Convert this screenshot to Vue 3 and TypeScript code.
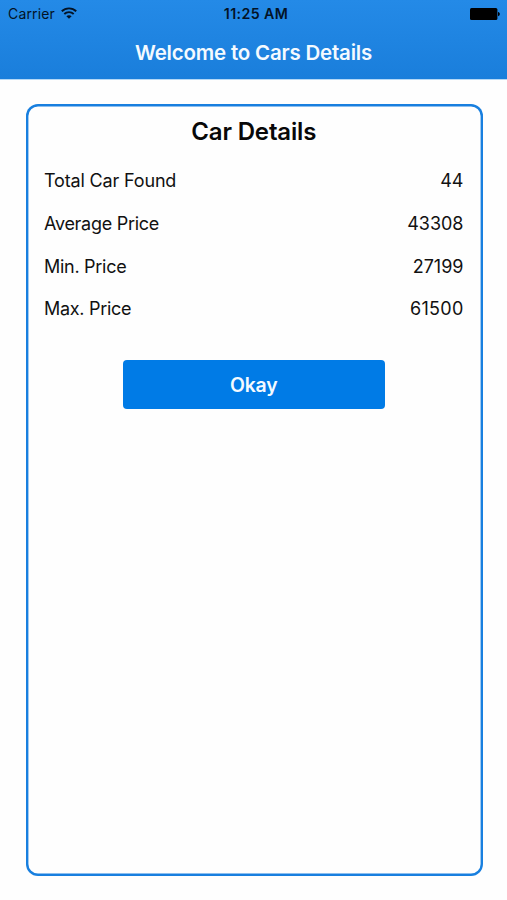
<script setup lang="ts">
interface DetailRow {
  label: string
  value: number
  tone: string
}

const rows: DetailRow[] = [
  { label: 'Total Car Found', value: 44, tone: 'total' },
  { label: 'Average Price', value: 43308, tone: 'average' },
  { label: 'Min. Price', value: 27199, tone: 'min' },
  { label: 'Max. Price', value: 61500, tone: 'max' },
]
</script>

<template>
  <div class="screen">
    <header class="header">
      <div class="status">
        <div class="carrier">
          <span class="carrier-name">Carrier</span>
          <svg class="wifi" width="16" height="12" viewBox="0 0 16 12" fill="none" stroke="#031326">
            <path d="M0.8 4.3C4.8 0.4 11.2 0.4 15.2 4.3" stroke-width="1.9" />
            <path d="M3.3 7C5.9 4.5 10.1 4.5 12.7 7" stroke-width="1.9" />
            <path d="M8 11.8L5.4 9.2C6.9 7.8 9.1 7.8 10.6 9.2Z" fill="#031326" stroke="none" />
          </svg>
        </div>
        <span class="time">11:25 AM</span>
        <svg class="battery" width="30" height="12" viewBox="0 0 30 12" fill="#000">
          <rect x="0" y="0" width="27.4" height="12" rx="1.5" />
          <path d="M28 4C30.4 4.2 30.4 8 28 8.2Z" />
        </svg>
      </div>
      <h1 class="title">Welcome to Cars Details</h1>
    </header>
    <main class="content">
      <section class="card">
        <h2 class="card-title">Car Details</h2>
        <dl class="rows">
          <div v-for="row in rows" :key="row.label" class="row" :class="row.tone">
            <dt class="label">{{ row.label }}</dt>
            <dd class="value">{{ row.value }}</dd>
          </div>
        </dl>
        <button class="okay" type="button">Okay</button>
      </section>
    </main>
  </div>
</template>

<style>
body {
  margin: 0;
  background: #fefefe;
}
</style>

<style scoped>
.screen {
  box-sizing: border-box;
  display: flex;
  flex-direction: column;
  width: 100%;
  height: 900px;
  overflow: hidden;
  background: #fefefe;
  color: #111;
  font-family: Inter, 'Liberation Sans', sans-serif;
}
.header {
  box-sizing: border-box;
  flex: none;
  height: 79px;
  background: linear-gradient(#248ae7, #1a7edb);
  box-shadow: 0 1px 0 #b5d8f6;
}
.status {
  display: grid;
  grid-template-columns: 1fr auto 1fr;
  align-items: center;
  height: 27px;
  padding: 0 7px 0 8px;
  color: #031326;
}
.carrier {
  display: flex;
  align-items: center;
  gap: 6px;
}
.carrier-name {
  font-size: 14px;
  letter-spacing: 0.15px;
  line-height: 27px;
}
.wifi {
  margin-top: -2px;
}
.time {
  padding-left: 4px;
  font-size: 14.2px;
  font-weight: 600;
  letter-spacing: 0.4px;
  line-height: 27px;
}
.battery {
  justify-self: end;
}
.title {
  margin: 0;
  padding-top: 13px;
  color: #f4faff;
  font-size: 20.5px;
  font-weight: 600;
  letter-spacing: -0.2px;
  line-height: 26px;
  text-align: center;
}
.content {
  display: flex;
  flex: 1;
  padding: 24.5px 24.5px 24.5px 25.5px;
}
.card {
  box-sizing: border-box;
  display: flex;
  flex: 1;
  flex-direction: column;
  align-items: center;
  box-shadow: inset 0 0 0 2.4px #187fdf;
  border-radius: 12px;
  padding: 13px 19px 0 18.5px;
}
.card-title {
  margin: 0;
  color: #080808;
  font-size: 24px;
  font-weight: 600;
  letter-spacing: -0.15px;
  line-height: 30px;
}
.rows {
  display: flex;
  flex-direction: column;
  align-self: stretch;
  margin: 13px 0 0;
}
.row {
  display: flex;
  align-items: center;
  justify-content: space-between;
  height: 42.7px;
  font-size: 18px;
}
.label,
.value {
  margin: 0;
}
.label {
  letter-spacing: -0.16px;
}
.average .label,
.min .label,
.max .label {
  letter-spacing: -0.28px;
}
.max .value {
  letter-spacing: 0.25px;
}
.okay {
  width: 262px;
  height: 49px;
  margin: 30px 0 0;
  padding: 1px 0 0;
  border: 0;
  border-radius: 4px;
  background: #007be6;
  color: #f4faff;
  font-family: inherit;
  font-size: 19.4px;
  font-weight: 600;
  letter-spacing: -0.2px;
}
</style>
